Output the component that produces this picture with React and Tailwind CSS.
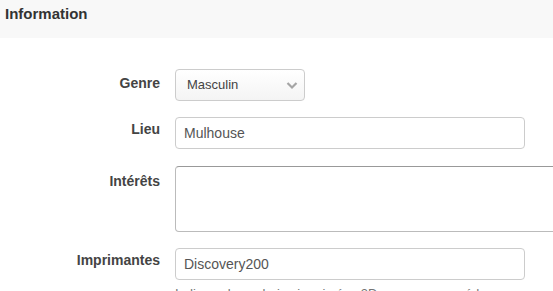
export default function App() {
  return (
    <div className="w-[553px] h-[291px] overflow-hidden bg-white font-['Liberation_Sans',Arial,sans-serif]">
      <div className="h-[38px] bg-[#f8f8f8] pl-[5px] pt-[4px]">
        <h2 className="text-[15px] leading-5 font-bold text-[#333]">Information</h2>
      </div>

      <div className="mt-[31px] grid grid-cols-[160px_auto] gap-x-[15px]">
        {/* Genre */}
        <label className="text-right text-[14px] leading-5 font-bold text-[#444] pt-[4px]">Genre</label>
        <div className="relative w-[130px] h-[32px] rounded-[4px] border border-[#ccc] bg-gradient-to-b from-white to-[#f4f4f4] flex items-center pl-[11px]">
          <span className="text-[13px] text-[#444]">Masculin</span>
          <svg className="absolute right-[6px] top-[11px]" width="12" height="9" viewBox="0 0 12 9">
            <path d="M1.5 2 L6 6.5 L10.5 2" fill="none" stroke="#a5a5a5" strokeWidth="2.2" />
          </svg>
        </div>

        {/* Lieu */}
        <label className="mt-4 text-right text-[14px] leading-5 font-bold text-[#444] pt-[2px]">Lieu</label>
        <div className="mt-4 w-[350px] h-[32px] rounded-[4px] border border-[#ccc] flex items-center pl-[8px]">
          <span className="text-[14px] text-[#555]">Mulhouse</span>
        </div>

        {/* Intérêts */}
        <label className="mt-[17px] text-right text-[14px] leading-5 font-bold text-[#444] pt-[5px]">Intérêts</label>
        <div className="mt-[17px] w-[400px] h-[66px] rounded-[4px] border border-[#bbb] border-t-[#999]"></div>

        {/* Imprimantes */}
        <label className="mt-4 text-right text-[14px] leading-5 font-bold text-[#444] pt-[2px]">Imprimantes</label>
        <div className="mt-4">
          <div className="w-[350px] h-[32px] rounded-[4px] border border-[#ccc] flex items-center pl-[8px]">
            <span className="text-[14px] text-[#555]">Discovery200</span>
          </div>
          <p className="mt-[4px] text-[13px] leading-5 text-[#737373]">Indiquez les galeries imprimées 3D que vous possédez</p>
        </div>
      </div>
    </div>
  )
}
